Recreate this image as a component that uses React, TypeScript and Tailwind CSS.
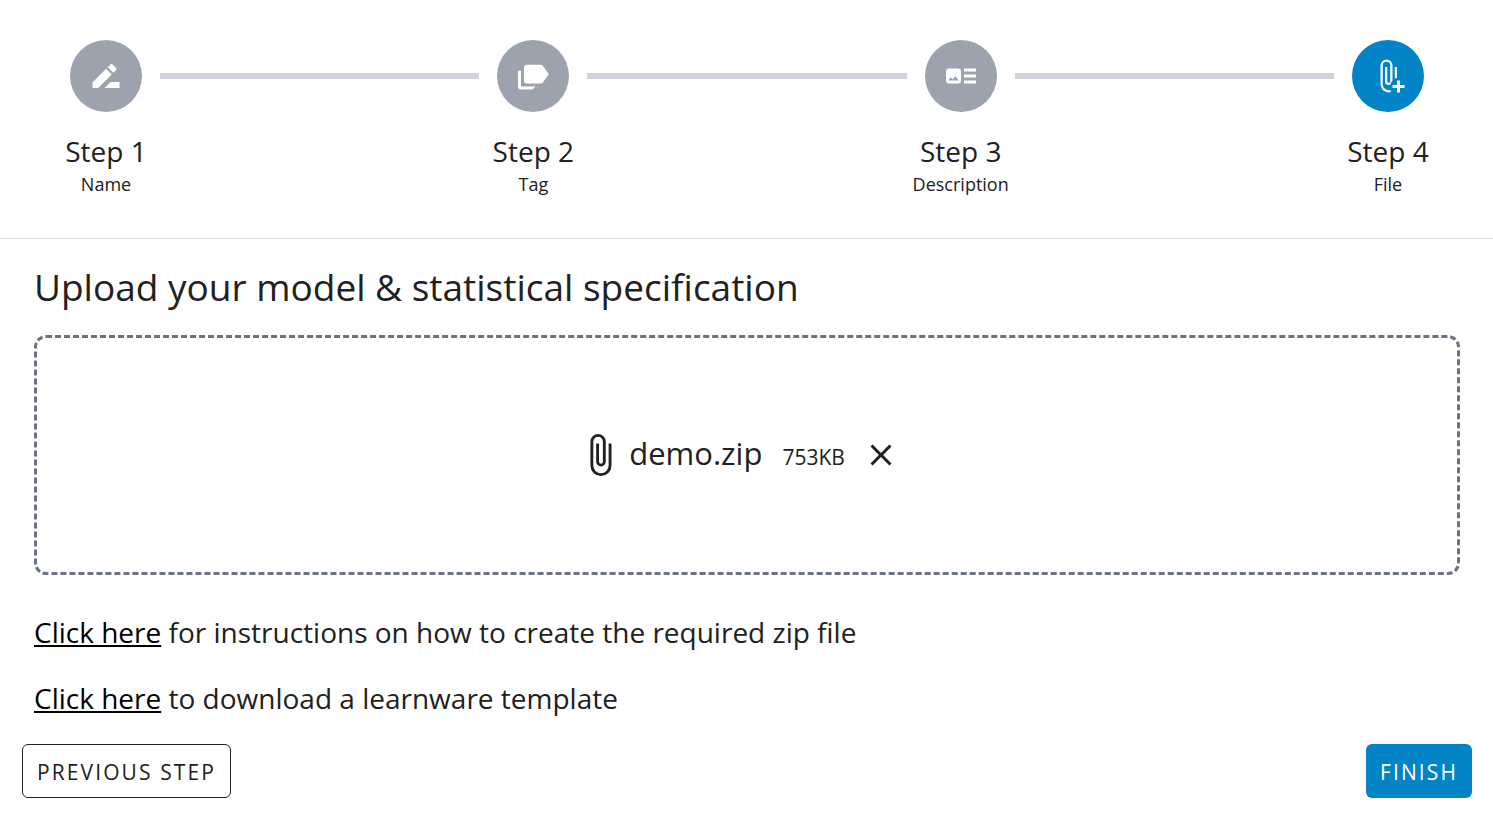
import { Fragment } from "react";

const icons = {
  rename:
    "M15,16L11,20H21V16H15M12.06,7.19L3,16.25V20H6.75L15.81,10.94L12.06,7.19M18.71,8.04C19.1,7.65 19.1,7 18.71,6.63L16.37,4.29C16.17,4.09 15.92,4 15.66,4C15.41,4 15.15,4.1 14.96,4.29L13.13,6.12L16.88,9.87L18.71,8.04Z",
  labels:
    "M8,4.5H17C17.7,4.5 18.3,4.8 18.7,5.4L22.5,10.75L18.7,16.1C18.3,16.7 17.7,17 17,17H8A2,2 0 0,1 6,15V6.5A2,2 0 0,1 8,4.5M2,8.5H4V19H13.7L12.3,20.4C11.9,20.8 11.4,21 10.8,21H4A2,2 0 0,1 2,19V8.5Z",
  imageText:
    "M22,13H14V11H22V13M22,7H14V9H22V7M14,17H22V15H14V17M12,9V15A2,2 0 0,1 10,17H4A2,2 0 0,1 2,15V9A2,2 0 0,1 4,7H10A2,2 0 0,1 12,9M10.5,15L8.3,12L6.5,14.3L5.3,12.8L3.5,15H10.5Z",
  clipPlus:
    "M18,15V18H15V20H18V23H20V20H23V18H20V15H18M16.5,6V13.6C17,13.3 17.5,13.15 18,13.1V6H16.5M15,5A4,4 0 0,0 11,1A4,4 0 0,0 7,5V17.5A5.5,5.5 0 0,0 12.5,23C13.1,23 13.7,22.9 14.2,22.7C13.9,22.3 13.7,21.8 13.5,21.3C13.2,21.45 12.9,21.5 12.5,21.5A4,4 0 0,1 8.5,17.5V5A2.5,2.5 0 0,1 11,2.5A2.5,2.5 0 0,1 13.5,5V15.5A1,1 0 0,1 12.5,16.5A1,1 0 0,1 11.5,15.5V6H10V15.5A2.5,2.5 0 0,0 12.5,18C12.9,18 13.3,17.9 13.6,17.7C13.8,16.7 14.3,15.8 15,15V5Z",
  clip:
    "M16.5,6V17.5A4,4 0 0,1 12.5,21.5A4,4 0 0,1 8.5,17.5V5A2.5,2.5 0 0,1 11,2.5A2.5,2.5 0 0,1 13.5,5V15.5A1,1 0 0,1 12.5,16.5A1,1 0 0,1 11.5,15.5V6H10V15.5A2.5,2.5 0 0,0 12.5,18A2.5,2.5 0 0,0 15,15.5V5A4,4 0 0,0 11,1A4,4 0 0,0 7,5V17.5A5.5,5.5 0 0,0 12.5,23A5.5,5.5 0 0,0 18,17.5V6H16.5Z",
  close:
    "M19,6.41L17.59,5L12,10.59L6.41,5L5,6.41L10.59,12L5,17.59L6.41,19L12,13.41L17.59,19L19,17.59L13.41,12L19,6.41Z",
};

function Icon({ path, className }: { path: string; className: string }) {
  return (
    <svg viewBox="0 0 24 24" fill="currentColor" aria-hidden="true" className={className}>
      <path d={path} />
    </svg>
  );
}

const steps = [
  { title: "Step 1", label: "Name", icon: icons.rename },
  { title: "Step 2", label: "Tag", icon: icons.labels },
  { title: "Step 3", label: "Description", icon: icons.imageText },
  { title: "Step 4", label: "File", icon: icons.clipPlus },
];

const current = 3;

export default function App() {
  return (
    <div className="min-h-screen bg-white font-['Open_Sans','Noto_Sans',sans-serif] text-[#212121]">
      <header className="border-b border-[#dedede] pt-10 pr-[69px] pb-10 pl-[70px]">
        <ol className="flex items-start">
          {steps.map((step, i) => (
            <Fragment key={step.title}>
              {i > 0 && <li aria-hidden="true" className="mx-[18px] mt-[33px] h-1.5 flex-1 bg-[#d1d5db]" />}
              <li
                aria-current={i === current ? "step" : undefined}
                className="flex w-[72px] flex-col items-center whitespace-nowrap"
              >
                <span
                  className={
                    i === current
                      ? "flex size-[72px] items-center justify-center rounded-full bg-[#0284c7] text-white"
                      : "flex size-[72px] items-center justify-center rounded-full bg-[#9ca3af] text-white"
                  }
                >
                  <Icon path={step.icon} className="size-9" />
                </span>
                <span className="mt-5 text-[28px] leading-[38px]">{step.title}</span>
                <span className="text-[18px] leading-7">{step.label}</span>
              </li>
            </Fragment>
          ))}
        </ol>
      </header>

      <main className="pt-[22px] pr-[33px] pl-[34px]">
        <h1 className="text-[37px] leading-[52px]">Upload your model &amp; statistical specification</h1>
        <section
          aria-label="Selected file"
          className="mt-[22px] flex h-60 items-center justify-center rounded-xl border-[3px] border-dashed border-[#6b7280]"
        >
          <Icon path={icons.clip} className="size-[46px]" />
          <p className="ml-1.5 flex items-baseline gap-5">
            <span className="text-[31px] leading-10">demo.zip</span>
            <span className="text-[21px] leading-10">753KB</span>
          </p>
          <button type="button" aria-label="Remove file" className="mx-[18px] flex">
            <Icon path={icons.close} className="size-9" />
          </button>
        </section>
        <p className="mt-9 text-[28px] leading-[42px]">
          <a href="#instructions" className="text-black underline">Click here</a> for instructions on how to create the
          required zip file
        </p>
        <p className="mt-6 text-[28px] leading-[42px]">
          <a href="#template" className="text-black underline">Click here</a> to download a learnware template
        </p>
      </main>

      <footer className="mx-2 mt-3 flex justify-between border-t border-[#fafafa] pt-3 pr-[13px] pb-5 pl-3.5">
        <button type="button" className="h-[54px] rounded-md border border-[#212121] px-3.5 pt-1 text-[21px] tracking-widest">
          PREVIOUS STEP
        </button>
        <button type="button" className="h-[54px] rounded-md bg-[#0284c7] px-3.5 pt-1 text-[21px] tracking-widest text-white">
          FINISH
        </button>
      </footer>
    </div>
  );
}
